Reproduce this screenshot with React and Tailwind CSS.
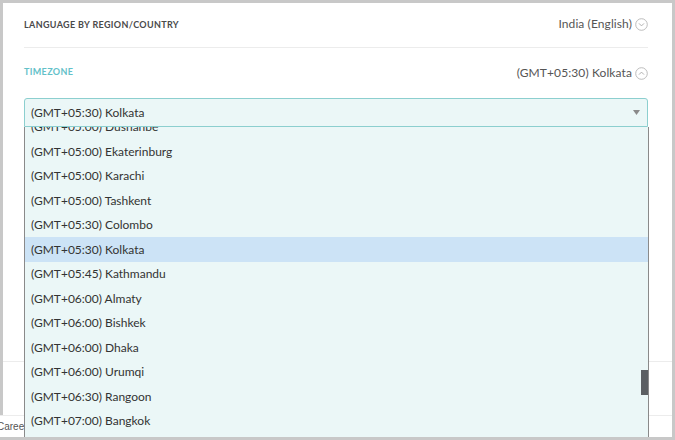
import React from "react";

const items = [
  "(GMT+05:00) Dushanbe",
  "(GMT+05:00) Ekaterinburg",
  "(GMT+05:00) Karachi",
  "(GMT+05:00) Tashkent",
  "(GMT+05:30) Colombo",
  "(GMT+05:30) Kolkata",
  "(GMT+05:45) Kathmandu",
  "(GMT+06:00) Almaty",
  "(GMT+06:00) Bishkek",
  "(GMT+06:00) Dhaka",
  "(GMT+06:00) Urumqi",
  "(GMT+06:30) Rangoon",
  "(GMT+07:00) Bangkok",
  "(GMT+07:00) Hanoi",
];

function CircleChevron({ up }) {
  return (
    <svg width="13" height="13" viewBox="0 0 13 13" className="ml-[3px] shrink-0">
      <circle cx="6.5" cy="6.5" r="5.8" fill="none" stroke="#b5b5b5" strokeWidth="0.9" />
      <path
        d={up ? "M4 7.6 L6.5 5.1 L9 7.6" : "M4 5.4 L6.5 7.9 L9 5.4"}
        fill="none"
        stroke="#a8a8a8"
        strokeWidth="0.9"
      />
    </svg>
  );
}

export default function App() {
  return (
    <div
      className="w-[675px] h-[440px] bg-[#c8c8c8] pt-[3px] pr-[3px] pb-[3px] flex flex-col overflow-hidden"
      style={{ fontFamily: "Lato, 'Open Sans', sans-serif" }}
    >
      <div className="ml-[3px] flex-1 bg-white pl-[21px] pr-[24px] flex flex-col">
        <div className="flex justify-between items-start pt-[13px] h-[45px] border-b border-[#ececec]">
          <div className="text-[9px] leading-[12px] mt-[3px] font-bold tracking-[0.35px] text-[#4a4a4a]">
            LANGUAGE BY REGION/COUNTRY
          </div>
          <div className="flex items-center text-[12px] leading-[16px] text-[#555] tracking-[0.1px]">
            India (English)
            <CircleChevron />
          </div>
        </div>
        <div className="flex justify-between items-start pt-[17px]">
          <div className="text-[9px] leading-[12px] mt-[1px] font-bold tracking-[0.35px] text-[#63c1c9]">
            TIMEZONE
          </div>
          <div className="flex items-center text-[12px] leading-[16px] text-[#555] tracking-[0.1px]">
            (GMT+05:30) Kolkata
            <CircleChevron up />
          </div>
        </div>
        <div className="relative mt-[17px] z-10">
          <div className="h-[29px] bg-[#ebf7f7] border border-[#8ccfcf] rounded-t-[3px] flex items-center justify-between pl-[6px] pr-[7px] text-[12px] text-[#333]">
            <span>(GMT+05:30) Kolkata</span>
            <svg width="7" height="5" viewBox="0 0 7 5">
              <path d="M0 0 H7 L3.5 5 Z" fill="#8a8a8a" />
            </svg>
          </div>
          <div className="absolute left-0 right-[-1px] top-full h-[310px] bg-[#ebf7f7] border-l border-r border-[#8a8a8a] overflow-hidden">
            <div className="-mt-[12.25px]">
              {items.map((t) => (
                <div
                  key={t}
                  className={
                    "h-[24.5px] flex items-center pl-[6px] text-[12px] text-[#333] " +
                    (t === "(GMT+05:30) Kolkata" ? "bg-[#cce3f6]" : "")
                  }
                >
                  {t}
                </div>
              ))}
            </div>
            <div className="absolute right-0 top-[243px] w-[7px] h-[25px] bg-[#5b5f63]" />
          </div>
        </div>
        <div className="h-[235px] border-b border-[#ececec] -mr-[24px] -ml-[21px]" />
      </div>
      <div className="h-[22px] bg-white border-t border-[#ececec] flex items-center">
        <span className="-ml-[3px] text-[10px] text-[#555]" style={{ fontFamily: "'Liberation Sans', sans-serif" }}>
          Careers
        </span>
      </div>
    </div>
  );
}
